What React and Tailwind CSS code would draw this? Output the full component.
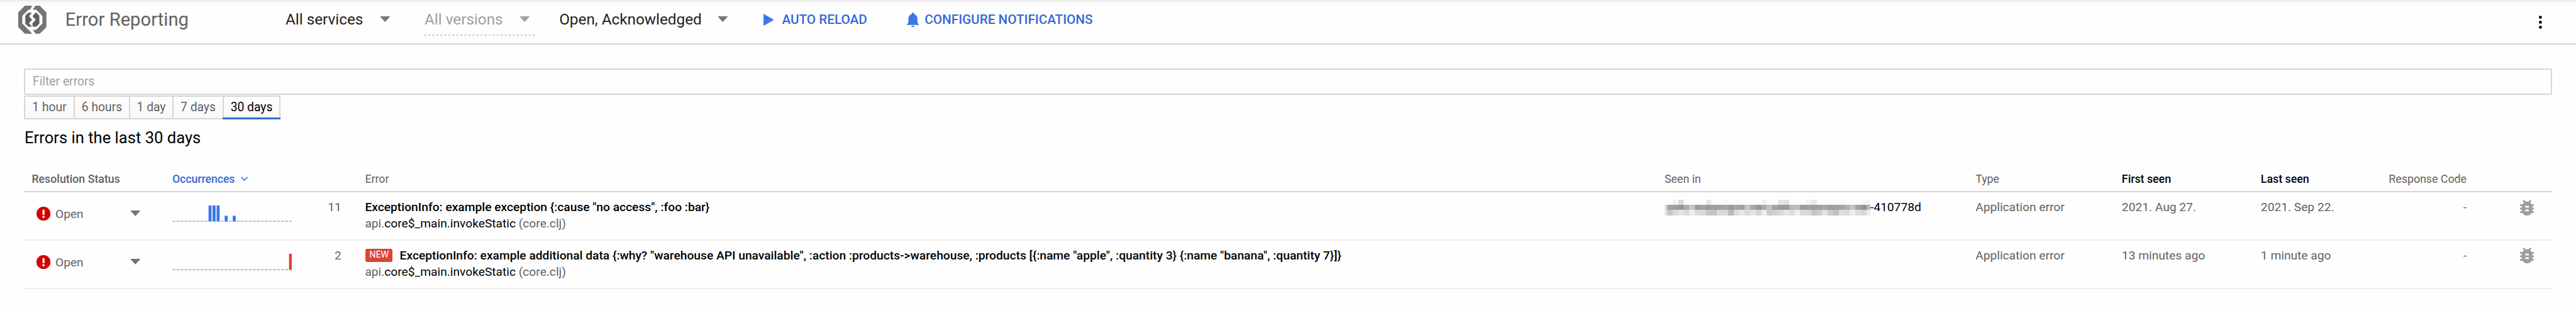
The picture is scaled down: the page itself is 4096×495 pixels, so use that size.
const BUG =
  'M20 8h-2.81c-.45-.78-1.07-1.45-1.82-1.96L17 4.41 15.59 3l-2.17 2.17C12.96 5.06 12.49 5 12 5c-.49 0-.96.06-1.41.17L8.41 3 7 4.41l1.62 1.63C7.88 6.55 7.26 7.22 6.81 8H4v2h2.09c-.05.33-.09.66-.09 1v1H4v2h2v1c0 .34.04.67.09 1H4v2h2.81c1.04 1.79 2.97 3 5.19 3s4.15-1.21 5.19-3H20v-2h-2.09c.05-.33.09-.66.09-1v-1h2v-2h-2v-1c0-.34-.04-.67-.09-1H20V8zm-6 8h-4v-2h4v2zm0-4h-4v-2h4v2z';
const BELL =
  'M12 22c1.1 0 2-.9 2-2h-4c0 1.1.89 2 2 2zm6-6v-5c0-3.07-1.64-5.64-4.5-6.32V4c0-.83-.67-1.5-1.5-1.5s-1.5.67-1.5 1.5v.68C7.63 5.36 6 7.92 6 11v5l-2 2v1h16v-1l-2-2z';

// Grey levels of the redacted host name, one string of hex pairs per strip.
const REDACTED = [
  { y: 0, h: 9.5, levels: 'fdfdf1d9fbfdfdfde7fdfdfbfdfafdfdfdfdeffdfde5e0fdfdfdf4e9fdfdfdfdf9fdfdfdf6f4' },
  { y: 9.5, h: 11, levels: 'dfa29f98adc69ca29aa1a1a69ca8a2c6a799acc2a49a9bb7bc9ca09f9fa69ea3a3b0c3a295b8' },
  { y: 20.5, h: 11.5, levels: 'e3c6dbe8daecdad9c6c3dbd7b9dae8dce5d6eccbd0d9e6ddeedad9c3cce2ccc0dfd9ecddd8ec' },
];

function Logo() {
  return (
    <svg viewBox="0 0 168 168" className="h-[44.8px] w-[44.8px] shrink-0">
      <g fill="#757575">
        <path d="M40 0H83L71 24H61L24 62V106L61 144H64L83 168H40L0 128V40Z" />
        <path d="M102 0H128L168 40V128L128 168H104L87 144H107L144 106V62L107 24H87Z" />
      </g>
      <g fill="#616161">
        <path d="M60 42H82L64 63L83 84L64 105L83 126H60L42 108V60Z" />
        <path d="M102 42H108L126 60V108L108 126H88L85 122V105L104 84L85 63Z" />
      </g>
    </svg>
  );
}

function Caret({ className }) {
  return (
    <svg viewBox="0 0 20.6 11.3" className={className}>
      <path d="M0 0H20.6L10.3 11.3Z" fill="currentColor" />
    </svg>
  );
}

function Redacted() {
  return (
    <svg viewBox="0 0 409 32" shapeRendering="crispEdges" className="h-[25.6px] w-[327.2px] shrink-0">
      {REDACTED.map((strip) =>
        strip.levels.match(/../g).map((v, i) => {
          const x = i === 0 ? 0 : 5 + (i - 1) * 11;
          return (
            <rect
              key={`${strip.y}-${i}`}
              x={x}
              y={strip.y}
              width={i === 0 ? 5 : i === 37 ? 8 : 11}
              height={strip.h}
              fill={`#${v}${v}${v}`}
            />
          );
        })
      )}
    </svg>
  );
}

function Sparkline({ bars, color }) {
  return (
    <svg viewBox="0 0 238 32" className="h-[25.6px] w-[190.4px] shrink-0">
      {Array.from({ length: 30 }, (_, i) => {
        const h = bars[i] || 0;
        return (
          <rect key={i} x={i * 8} y={h ? 32 - h : 30.9} width="6" height={h || 1.1} fill={h ? color : '#3b78e7'} />
        );
      })}
    </svg>
  );
}

function StatusIcon() {
  return (
    <svg viewBox="0 0 28 28" className="h-[22.4px] w-[22.4px] shrink-0">
      <circle cx="14" cy="14" r="14" fill="#d50000" />
      <path d="M12 6h4v10h-4zM12 18.2h4v4h-4z" fill="#fff" />
    </svg>
  );
}

const ERRORS = [
  {
    bars: { 9: 32, 10: 32, 11: 32, 13: 11.5, 15: 11.5 },
    color: '#3b78e7',
    count: 11,
    title: 'ExceptionInfo: example exception {:cause "no access", :foo :bar}',
    seenIn: '-410778d',
    first: '2021. Aug 27.',
    last: '2021. Sep 22.',
  },
  {
    bars: { 29: 32 },
    color: '#db4437',
    count: 2,
    isNew: true,
    title:
      'ExceptionInfo: example additional data {:why? "warehouse API unavailable", :action :products->warehouse, :products [{:name "apple", :quantity 3} {:name "banana", :quantity 7}]}',
    first: '13 minutes ago',
    last: '1 minute ago',
  },
];

const COLS = 'grid grid-cols-[235.6px_306.4px_2066.4px_494.4px_232.7px_221px_150px_177.2px_135.5px]';

function ErrorRow({ error }) {
  return (
    <div className={`${COLS} h-[76.8px] border-b-2 border-[#ebebeb] text-[19.2px] leading-[26px] text-[#616161]`}>
      <div className="flex h-[67.2px] items-center pl-[19.2px]">
        <StatusIcon />
        <span className="w-[127.2px] pl-2 pt-[2.8px]">Open</span>
        <Caret className="h-[9px] w-[16.5px] text-[#757575]" />
      </div>
      <div className="flex items-start justify-between pr-[37.6px]">
        <div className="flex pt-[20.8px]">
          <Sparkline bars={error.bars} color={error.color} />
        </div>
        <span className="pt-[10.8px]">{error.count}</span>
      </div>
      <div className="pt-[10.8px]">
        <div className="flex items-start text-[19.23px] font-medium text-black">
          {error.isNew && (
            <span className="ml-[0.8px] mr-[11.2px] mt-[2px] flex h-[20.8px] w-[43.2px] items-center justify-center rounded-[3px] bg-[#db4437] text-[14.4px] leading-none font-normal text-white">
              NEW
            </span>
          )}
          {error.title}
        </div>
        <div>
          api.<span className="text-black">core$_main.invokeStatic</span> (core.clj)
        </div>
      </div>
      <div className="flex items-start text-black">
        {error.seenIn && (
          <>
            <div className="flex pt-[11.2px]">
              <Redacted />
            </div>
            <span className="pt-[10.8px]">{error.seenIn}</span>
          </>
        )}
      </div>
      <div className="pt-[10.8px]">Application error</div>
      <div className="pt-[10.8px]">{error.first}</div>
      <div className="pt-[10.8px]">{error.last}</div>
      <div className="pt-[10.8px] text-right">-</div>
      <div className="flex items-start pl-[84.8px] pt-[11.2px]">
        <svg viewBox="4 3 16 18" className="h-[25.2px] w-[22.4px]">
          <path d={BUG} fill="#9e9e9e" />
        </svg>
      </div>
    </div>
  );
}

export default function App() {
  return (
    <div className="h-[495px] w-[4096px] overflow-hidden whitespace-nowrap bg-[#fefefe] font-['Roboto',sans-serif]">
      <header className="h-[71px] border-b-2 border-[#d6d6d6] bg-[linear-gradient(to_bottom,#e8e8e8_0,#f7f7f7_3px,#fefefe_9px)]">
        <div className="flex h-[62.4px] items-center pl-[28.8px] text-[24.3px]">
          <Logo />
          <h1 className="w-[380.4px] pl-[30.2px] text-[29.2px] leading-none text-[#616161]">Error Reporting</h1>
          <div className="flex w-[166.4px] items-center justify-between text-[#212121]">
            All services
            <Caret className="mb-[2px] h-[9px] w-[16.5px] text-[#757575]" />
          </div>
          <div className="relative ml-[54.6px] flex h-[51.2px] w-[175.4px] items-center justify-between pr-[7.4px] text-[#9e9e9e]">
            All versions
            <Caret className="mb-[2px] h-[9px] w-[16.5px] text-[#9e9e9e]" />
            <svg viewBox="0 0 219 2" className="absolute bottom-0 left-0 h-[1.6px] w-[175.2px]">
              <path d="M0 1H219" stroke="#9e9e9e" strokeWidth="2" strokeDasharray="2.6 5.4" />
            </svg>
          </div>
          <div className="ml-[38.8px] flex w-[268.4px] items-center justify-between text-[#212121]">
            Open, Acknowledged
            <Caret className="mb-[2px] h-[9px] w-[16.5px] text-[#757575]" />
          </div>
          <div className="ml-[56.8px] flex w-[227.2px] items-center text-[20.7px] font-medium text-[#3367d6]">
            <svg viewBox="0 0 21 24" className="mr-[12.3px] h-[19.2px] w-[16.8px]">
              <path d="M0 0L21 12L0 24Z" fill="#3b78e7" />
            </svg>
            AUTO RELOAD
          </div>
          <div className="flex items-center text-[20.7px] font-medium text-[#3367d6]">
            <svg viewBox="4 2.5 16 19.5" className="mr-[9.6px] mt-[1px] h-[23.4px] w-[19.2px]">
              <path d={BELL} fill="#3b78e7" />
            </svg>
            CONFIGURE NOTIFICATIONS
          </div>
          <svg viewBox="0 0 6 26" className="ml-auto mr-[54.4px] mt-[8px] h-[20.8px] w-[4.8px]">
            <circle cx="3" cy="3" r="3" />
            <circle cx="3" cy="13" r="3" />
            <circle cx="3" cy="23" r="3" />
          </svg>
        </div>
      </header>

      <main className="pl-[38px] pt-[38px]">
        <div className="flex h-[42px] w-[4020px] items-center rounded-[2px] border-2 border-[#d5d5d5] pl-[12px] text-[19.3px] text-[#9e9e9e]">
          Filter errors
        </div>
        <div className="mt-px flex h-[38px] w-[408px] rounded-[2px] border-2 border-[#d5d5d5] bg-gradient-to-b from-[#fefefe] to-[#f8f8f8] text-[19.3px] text-[#616161]">
          <div className="flex w-[77px] items-center justify-center">1 hour</div>
          <div className="flex w-[88px] items-center justify-center border-l-2 border-[#d5d5d5]">6 hours</div>
          <div className="flex w-[69px] items-center justify-center border-l-2 border-[#d5d5d5]">1 day</div>
          <div className="flex w-[80px] items-center justify-center border-l-2 border-[#d5d5d5]">7 days</div>
          <div className="relative flex w-[90px] items-center justify-center border-l-2 border-[#d5d5d5] text-black">
            30 days
            <span className="absolute -bottom-[2px] -left-[2px] h-[3px] w-[92px] bg-[#3367d6]" />
          </div>
        </div>
        <h2 className="mt-[13px] h-[32px] pl-px text-[25.6px] leading-[32px] text-black">Errors in the last 30 days</h2>

        <div className={`${COLS} mt-[27.6px] ml-[0.4px] h-[41.8px] w-[4019.2px] pt-[10px] text-[17.8px] leading-[24px] text-[#616161]`}>
          <div className="pl-[12px] font-medium">Resolution Status</div>
          <div className="flex items-start text-[17.6px] font-medium text-[#3367d6]">
            Occurrences
            <svg viewBox="0 0 14 9" className="ml-[9.4px] mt-[8px] h-[7.2px] w-[11.2px]">
              <path d="M1 1L7 7.5L13 1" fill="none" stroke="currentColor" strokeWidth="1.9" />
            </svg>
          </div>
          <div>Error</div>
          <div>Seen in</div>
          <div>Type</div>
          <div className="font-medium text-black">First seen</div>
          <div className="font-medium text-black">Last seen</div>
          <div className="text-right">Response Code</div>
          <div />
        </div>
        <div className="ml-[0.4px] w-[4019.2px] border-t-2 border-[#d5d5d5]">
          {ERRORS.map((error) => (
            <ErrorRow key={error.count} error={error} />
          ))}
        </div>
      </main>
    </div>
  );
}
